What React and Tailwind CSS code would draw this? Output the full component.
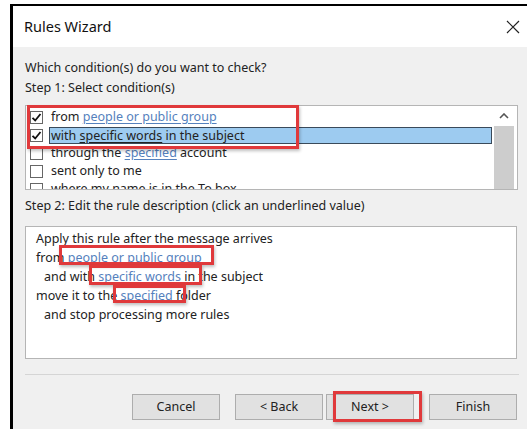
import React from "react";

const font = { fontFamily: '"Noto Sans", "Open Sans", sans-serif' };

// Small underlined value inside rule text
const Link = ({ children }) => (
  <span className="text-[#5581bd] underline decoration-[#5581bd] underline-offset-2">
    {children}
  </span>
);

const Check = ({ checked }) => (
  <span className="w-[13px] h-[13px] border border-[#666] bg-white flex items-center justify-center shrink-0">
    {checked && (
      <svg width="11" height="11" viewBox="0 0 11 11">
        <path d="M1.5 5.8 L4.2 8.5 L9.5 2" fill="none" stroke="#111" strokeWidth="1.8" />
      </svg>
    )}
  </span>
);

const conditions = [
  { checked: true, content: <>from <Link>people or public group</Link></> },
  {
    checked: true,
    selected: true,
    content: (
      <>
        with <span className="underline underline-offset-2">specific words</span> in the subject
      </>
    ),
  },
  { checked: false, content: <>through the <Link>specified</Link> account</> },
  { checked: false, content: <>sent only to me</> },
  { checked: false, content: <>where my name is in the To box</> },
];

const Button = ({ children }) => (
  <button className="w-[88px] h-[26px] bg-[#e1e1e1] border border-[#adadad] text-[12.5px] text-[#222]">
    {children}
  </button>
);

// Red callout frame drawn over the dialog
const Callout = ({ className }) => (
  <div
    className={
      "absolute border-[3px] border-[#e0393b] shadow-[1px_2px_3px_rgba(0,0,0,0.25)] pointer-events-none " +
      className
    }
  />
);

export default function App() {
  return (
    <div
      className="relative w-[527px] h-[429px] bg-white pt-[4px] pl-[10px] overflow-hidden text-[#222]"
      style={font}
    >
      <div className="h-full border-l-[3px] border-t-[2px] border-black bg-[#f0f0f0] flex flex-col w-[540px]">
        {/* title bar */}
        <div className="h-[41px] bg-white flex items-center justify-between pl-[11px] pr-[30px]">
          <span className="text-[14.5px] text-[#111]">Rules Wizard</span>
          <svg width="14" height="14" viewBox="0 0 14 14">
            <path d="M1 1 L13 13 M13 1 L1 13" stroke="#222" strokeWidth="1.2" />
          </svg>
        </div>

        <div className="pl-[12px] flex flex-col text-[12.5px]">
          <div className="mt-[12px] h-[18px] leading-[18px]">Which condition(s) do you want to check?</div>
          <div className="mt-[2px] h-[18px] leading-[18px]">Step 1: Select condition(s)</div>

          {/* condition list */}
          <div className="mt-[8px] w-[493px] h-[85px] bg-white border border-[#b5b5b5] flex overflow-hidden">
            <div className="flex-1 pt-[2px] pl-[4px] flex flex-col">
              {conditions.map((c, i) => (
                <div key={i} className="h-[18px] flex items-center gap-[6px] shrink-0">
                  <Check checked={c.checked} />
                  <span
                    className={
                      c.selected
                        ? "flex-1 h-[17px] leading-[15px] bg-[#9dcbf0] border border-[#3a4a5a] pl-[1px]"
                        : "leading-[18px] pl-[2px]"
                    }
                  >
                    {c.content}
                  </span>
                </div>
              ))}
            </div>
            <div className="w-[20px] ml-[2px] mr-[3px] flex flex-col">
              <div className="h-[20px] flex items-center justify-center">
                <svg width="10" height="6" viewBox="0 0 10 6">
                  <path d="M1 5 L5 1 L9 5" fill="none" stroke="#555" strokeWidth="1.6" />
                </svg>
              </div>
              <div className="flex-1 bg-[#cdcdcd]" />
            </div>
          </div>

          <div className="mt-[7px] h-[18px] leading-[18px]">
            Step 2: Edit the rule description (click an underlined value)
          </div>

          {/* rule description */}
          <div className="mt-[11px] w-[492px] h-[133px] bg-white border border-[#b5b5b5] pl-[10px] pt-[2px] leading-[19px]">
            <div>Apply this rule after the message arrives</div>
            <div>
              from <Link>people or public group</Link>
            </div>
            <div className="pl-[8px]">
              and with <Link>specific words</Link> in the subject
            </div>
            <div>
              move it to the <Link>specified</Link> folder
            </div>
            <div className="pl-[8px]">and stop processing more rules</div>
          </div>

          <div className="mt-[15px] w-[494px] h-[2px] border-t border-[#d5d5d5] border-b-white" />

          <div className="mt-[18px] w-[494px] flex justify-end gap-[15px] pr-[2px]">
            <Button>Cancel</Button>
            <div className="flex gap-[3px]">
              <Button>&lt; Back</Button>
              <Button>Next &gt;</Button>
            </div>
            <Button>Finish</Button>
          </div>
        </div>
      </div>

      <Callout className="left-[27px] top-[105px] w-[272px] h-[44px]" />
      <Callout className="left-[59px] top-[245px] w-[155px] h-[20px]" />
      <Callout className="left-[89px] top-[265px] w-[113px] h-[20px]" />
      <Callout className="left-[113px] top-[285px] w-[73px] h-[18px]" />
      <Callout className="left-[333px] top-[391px] w-[89px] h-[31px]" />
    </div>
  );
}
